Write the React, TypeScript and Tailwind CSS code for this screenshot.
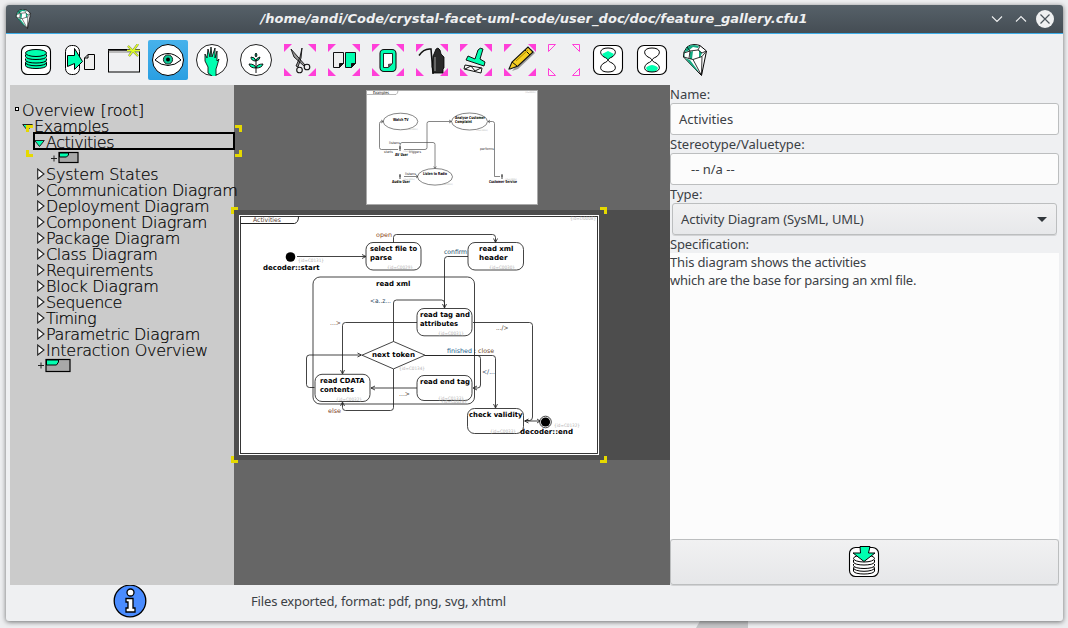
import React from 'react';

const GREEN = '#00ffb0';

type TextProps = {
  x: number;
  y: number;
  w: number;
  children: string;
  size?: number;
  bold?: boolean;
  fill?: string;
};

function Label({ x, y, w, children, size = 7, bold = false, fill = '#000' }: TextProps) {
  return (
    <text
      x={x}
      y={y}
      textLength={w}
      lengthAdjust="spacingAndGlyphs"
      fontSize={size}
      fontWeight={bold ? 700 : 400}
      fill={fill}
    >
      {children}
    </text>
  );
}

function Id({ x, y, w = 26, children, size = 4.6 }: { x: number; y: number; w?: number; children: string; size?: number }) {
  return (
    <Label x={x} y={y} w={w} size={size} fill="#b4b4b4">
      {children}
    </Label>
  );
}

function Disks({ fill, y = 0 }: { fill: string; y?: number }) {
  return (
    <g fill={fill} stroke="#000" strokeWidth="1" transform={`translate(0 ${y})`}>
      <path d="M5.500 19.500v3c0 4 21 4 21 0v-3" />
      <ellipse cx="16" cy="19.500" rx="10.500" ry="3.300" />
      <path d="M5.500 15.500v1.500c0 4 21 4 21 0v-1.500" />
      <path d="M5.500 11.500v2c0 4 21 4 21 0v-2" />
      <ellipse cx="16" cy="10" rx="10.500" ry="3.500" />
    </g>
  );
}

function Corners() {
  return <path d="M0 0h8L0 8zM32 0v8L24 0zM0 32v-8l8 8zM32 32h-8l8-8z" fill="#ff3fd8" />;
}

function Gem() {
  return (
    <g strokeLinejoin="round">
      <path d="M7 3Q10 .6 14 .6q4 0 6 1l6.500 5.400L21.500 31.500 5 14.500 3.500 13 4 8z" fill="#fff" stroke="#000" strokeWidth="1" />
      <path d="M7 3Q10 1 14 1l5 1-1 2-5-1-5 4-3 1-.5 5L4 13l.5-5z" fill="#14a982" />
      <path d="M5 14l5 2 9 12-4-3zM10 8l3-1-1 8h-2zM19 6l3 3-2 5-1-1z" fill="#14a982" />
      <path
        d="M7 3l3 4 8-1 2-4M10 7L4 9M18 6l4 3 4-2M10 7L9 14.500l4 1 9-3 4-5M9 14.500L4 13M13 15.500l8 15M22 12.500l-.5 18"
        fill="none"
        stroke="#000"
        strokeWidth=".8"
      />
    </g>
  );
}

function Hourglass({ top }: { top: boolean }) {
  return (
    <g stroke="#000">
      <rect x="1.500" y="1.500" width="29" height="29" rx="6.500" fill="#fff" strokeWidth="1.100" />
      {top ? (
        <path d="M10 10l6-3 6 3q-1 3-4 4l-2 2-2-2q-3-1-4-4z" fill={GREEN} stroke="none" />
      ) : (
        <path d="M10 24q1-2 6-3 5 1 6 3-1 4-6 4t-6-4z" fill={GREEN} stroke="none" />
      )}
      <path d="M16 4c-9 0-9 6-4 9 5 2 5 4 0 6-5 3-5 9 4 9s9-6 4-9c-5-2-5-4 0-6 5-3 5-9-4-9z" fill="none" />
    </g>
  );
}

const icons: React.ReactNode[] = [
  <g>
    <rect x="1.500" y="1.500" width="29" height="29" rx="6" fill="#fff" stroke="#000" strokeWidth="1.100" />
    <Disks fill={GREEN} y={-1} />
  </g>,
  <g stroke="#000">
    <rect x="1.500" y="1.500" width="14" height="29" rx="6" fill="#fff" />
    <path d="M3.500 11.500h7V4.500l8 13-8 8v-6l-7 3z" fill={GREEN} />
    <path d="M24 10.500h6.500v15h-10V14z" fill="#eee" />
    <path d="M24 10.500V14h-3.500" fill="none" />
  </g>,
  <g>
    <rect x=".5" y="5.500" width="31" height="22.500" fill="#eff0f2" stroke="#000" />
    <path d="M1 7.500h30" stroke="#bbb" strokeWidth="3" />
    <path d="M.5 6.500h31" stroke="#444" />
    <path d="M20 2l10 10M30 0L21 12M19 6.500h13" stroke="#666" strokeWidth="2.200" />
    <path d="M20 2l10 10M30 0L21 12M19 6.500h13" stroke="#dfff25" strokeWidth="1.500" />
  </g>,
  <g>
    <circle cx="16" cy="16" r="15.500" fill="#fff" stroke="#000" />
    <path d="M3 16q6-6.500 13-6.500t13 6.500q-6 5.500-13 5.500T3 16z" fill="#fff" stroke="#000" />
    <circle cx="16" cy="15.500" r="4.600" fill="#09c996" stroke="#222" />
    <circle cx="16" cy="15.500" r="2" fill="#000" />
  </g>,
  <g>
    <circle cx="16" cy="16" r="15.500" fill="#fff" stroke="#222" />
    <path d="M12 29v-6l-3-6V10l2 4 1-9 2 8 1-10 1 10 3-9v10l2-7v10l2-2-2 7-1 3v10z" fill={GREEN} stroke="#111" strokeWidth=".9" />
  </g>,
  <g>
    <circle cx="16" cy="16" r="15.500" fill="#fff" stroke="#222" />
    <g fill={GREEN} stroke="#111" strokeWidth="1">
      <path d="M16 29V15M16 24q-1-4-7-4 1 4 7 4zM16 24q1-4 7-4-1 4-7 4zM16 17q-1-4-5-4 0 4 5 4zM16 17q0-3 4-4 0 3-4 4z" />
      <path d="M16 13q-2-2 0-4 2 2 0 4z" />
    </g>
  </g>,
  <g>
    <Corners />
    <g fill="#eee" stroke="#111" strokeWidth="1.100">
      <path d="M7 5l3 8 10 9 1-1zM18 4l-2 9-4 9 2 1 3-9z" fill="#999" strokeWidth=".9" />
      <circle cx="15.500" cy="26" r="2.800" />
      <circle cx="23" cy="23" r="2.800" />
    </g>
  </g>,
  <g>
    <Corners />
    <g stroke="#111" strokeWidth="1">
      <path d="M5.500 8.500h10v11l-4 4h-6z" fill="#eee" />
      <path d="M17.500 8.500h10v11l-4 4h-6z" fill={GREEN} />
      <path d="M15.500 19.500l-4 4v-4zM27.500 19.500l-4 4v-4z" fill="#111" />
    </g>
  </g>,
  <g>
    <Corners />
    <rect x="8" y="5.500" width="16" height="22" rx="4" fill={GREEN} stroke="#111" strokeWidth="1.100" />
    <path d="M11.500 9.500h9v10l-4 4h-5z" fill="#fff" stroke="#111" strokeWidth=".9" />
    <path d="M21 19l-5 5v-4z" fill="#555" />
  </g>,
  <g>
    <Corners />
    <path d="M3 11.500Q8 4 15 5l2 25" fill="none" stroke="#111" strokeWidth="1.500" />
    <path d="M18 10l2-5 2-1 2 2 1 4 3 3v11l-1 1v4H17v-4l-1-2 1-11z" fill="#292929" stroke="#000" strokeWidth=".8" />
    <path d="M19 13v14" stroke="#666" strokeWidth="2" />
  </g>,
  <g>
    <Corners />
    <g stroke="#111" strokeWidth="1">
      <path d="M8 12l7 3 3-9q2-3 5-1l-3 10 5 3-1 4-18-6z" fill={GREEN} />
      <path d="M5 21l17 3-1 5-17-4zM5 25l6-3 4 5 6-3" fill="#fff" />
    </g>
  </g>,
  <g>
    <Corners />
    <path d="M27 5l4 4-17 16-6 2z" fill="#999" />
    <path d="M5 25l3-7L24 3l5 5-15 14-8 3z" fill="#f5ce20" stroke="#111" strokeWidth="1.100" />
    <path d="M8 18l5 4M21 6l5 5" stroke="#111" />
    <path d="M12 17L24 6" stroke="#ac8c00" />
  </g>,
  <path d="M.5.500h7l-7 7zM31.500.500v7l-7-7zM.5 31.500v-7l7 7zM31.500 31.500h-7l7-7z" fill="#f5eef4" stroke="#ff3fd8" />,
  <Hourglass top />,
  <Hourglass top={false} />,
  <Gem />,
];

function Toolbar() {
  return (
    <div className="flex h-[51px] shrink-0 gap-1 pl-2.5 pt-1.5">
      {icons.map((icon, i) => (
        <button
          key={i}
          className={
            i === 3
              ? 'flex size-10 items-center justify-center rounded-[2px] bg-gradient-to-b from-[#47b2eb] to-[#299fe2]'
              : 'flex size-10 items-center justify-center'
          }
        >
          <svg width="32" height="32" viewBox="0 0 32 32" fill="none">
            {icon}
          </svg>
        </button>
      ))}
    </div>
  );
}

function TitleBar() {
  return (
    <header className="flex h-[29px] shrink-0 items-center rounded-t-[3px] border-b border-[#3daee9] bg-gradient-to-b from-[#566169] to-[#454d54] pl-2 pr-[9px]">
      <svg width="20" height="20" viewBox="0 0 32 32" className="shrink-0">
        <Gem />
      </svg>
      <h1 className="flex-1 whitespace-nowrap pl-[46px] text-center font-['DejaVu_Sans'] text-[13px] font-bold italic leading-7 tracking-[0.035px] text-[#eff0f1]">
        /home/andi/Code/crystal-facet-uml-code/user_doc/doc/feature_gallery.cfu1
      </h1>
      <svg width="66" height="20" viewBox="0 0 66 20" fill="none">
        <path d="M4 7.500l5 5 5-5M28 12.500l5-5 5 5" stroke="#eff0f1" strokeWidth="1.100" />
        <circle cx="57" cy="10" r="9" fill="#eff0f1" />
        <path d="M52.500 5.500l9 9m0-9l-9 9" stroke="#4b545b" strokeWidth="1.200" />
      </svg>
    </header>
  );
}

function AddIcon({ small }: { small?: boolean }) {
  const w = small ? 20 : 25;
  const h = small ? 11 : 13;
  return (
    <svg width="34" height="16" viewBox="0 0 34 16" fill="none">
      <path d="M0 7.500h6M3 4.500v6" stroke="#222" />
      <rect x="8" y="1.500" width={w - 1} height={h - 1} fill="#a8a8a8" stroke="#000" strokeWidth="1.200" />
      <path d={small ? 'M8.500 2h9v2l-2 2h-7z' : 'M8.500 2h12v2l-2 3h-10z'} fill={GREEN} stroke="#000" />
    </svg>
  );
}

const closedRows: [string, string][] = [
  ['System States', 'tracking-[-0.23px]'],
  ['Communication Diagram', 'tracking-[-0.38px]'],
  ['Deployment Diagram', 'tracking-[-0.44px]'],
  ['Component Diagram', 'tracking-[-0.3px]'],
  ['Package Diagram', 'tracking-[-0.33px]'],
  ['Class Diagram', 'tracking-[-0.3px]'],
  ['Requirements', 'tracking-[-0.33px]'],
  ['Block Diagram', 'tracking-[-0.26px]'],
  ['Sequence', 'tracking-[-0.37px]'],
  ['Timing', 'tracking-[-0.6px]'],
  ['Parametric Diagram', 'tracking-[-0.33px]'],
  ['Interaction Overview', 'tracking-[-0.27px]'],
];

function OpenArrow() {
  return (
    <svg width="11" height="9" viewBox="0 0 11 9" className="mr-px shrink-0">
      <path d="M.7 1.500h9.600l-4.800 6z" fill={GREEN} stroke="#222" />
    </svg>
  );
}

function Tree() {
  return (
    <nav className="relative z-10 w-[224px] shrink-0 whitespace-nowrap bg-[#cbcbcb] pt-[18px] font-['DejaVu_Sans'] text-[16px] font-extralight leading-4 text-black [-webkit-text-stroke:0.2px_#000]">
      <div className="flex h-4 items-center pl-[5px] tracking-[-0.2px]">
        <span className="mb-1 mr-[3px] size-1 border border-black bg-white" />
        Overview [root]
      </div>
      <div className="flex h-4 items-center pl-3 tracking-[-0.35px]">
        <OpenArrow />
        Examples
      </div>
      <div className="flex h-4 items-center pl-6 tracking-[-0.5px]">
        <OpenArrow />
        Activities
      </div>
      <div className="flex h-4 pl-[41px]">
        <AddIcon small />
      </div>
      {closedRows.map(([name, tracking]) => (
        <div key={name} className={`flex h-4 items-center pl-[27px] ${tracking}`}>
          <svg width="8" height="12" viewBox="0 0 8 12" className="mb-0.5 mr-px shrink-0">
            <path d="M.7 1v10l6.300-5z" fill="#fff" stroke="#222" strokeWidth="1.100" />
          </svg>
          {name}
        </div>
      ))}
      <div className="-mt-px flex h-4 pl-7">
        <AddIcon />
      </div>
      <div className="absolute left-[23px] top-[47px] h-[18px] w-[202px] border-2 border-black" />
      <svg className="absolute left-4 top-10" width="216" height="32" viewBox="0 0 216 32">
        <path d="M0 0h7v3H3v4H0zM209 0h7v7h-3V3h-4zM0 25h3v4h4v3H0zM213 25h3v7h-7v-3h4z" fill="#e5d900" />
      </svg>
    </nav>
  );
}

function ExamplesDiagram() {
  return (
    <svg width="172" height="115" viewBox="366 90 172 115" className="font-['DejaVu_Sans']">
      <rect x="366" y="90" width="172" height="115" fill="#fff" />
      <rect x="366.500" y="90.500" width="171" height="114" fill="none" stroke="#aaa" />
      <path d="M367 94.500h29q2-1 2-4" fill="none" stroke="#888" strokeWidth=".6" />
      <g fill="none" stroke="#444" strokeWidth=".65">
        <ellipse cx="400.500" cy="121.500" rx="17.300" ry="8.300" />
        <ellipse cx="469.500" cy="121.500" rx="18" ry="8.500" />
        <ellipse cx="435" cy="176.800" rx="17.500" ry="8.300" />
        <path d="M398 149.500h-16.500q-2 0-2-2V123.500q0-2 2-2H383" />
        <path d="M404 149.500h21q2 0 2-2V123.500q0-2 2-2h22" />
        <path d="M400 147v-1.500q0-3 2-3h31q2 0 2 2V168" />
        <path d="M404 176.500h14" />
        <path d="M500 176.500h-5.500V123.500q0-2-2-2H488" />
        <path d="M381 120l2.500 1.500L381 123M449 120l2.500 1.500-2.500 1.500M433.700 166.500l1.300 2 1.300-2M416 175l2 1.500-2 1.500M490 120l-2 1.500 2 1.500" />
        <path d="M400 146v5M399 148h2M400 174v5M399 176h2M502 174v5M501 176h2" strokeWidth="1" />
      </g>
      <Label x={373} y={94.300} w={16} size={4}>Examples</Label>
      <Label x={393} y={120.500} w={15.500} size={4} bold>Watch TV</Label>
      <Label x={455} y={119} w={30} size={4} bold>Analyse Customer</Label>
      <Label x={455} y={123} w={17} size={4} bold>Complaint</Label>
      <Label x={423} y={175} w={24} size={4} bold>Listen to Radio</Label>
      <Label x={395} y={155.500} w={13} size={4} bold>AV User</Label>
      <Label x={392} y={183} w={18} size={4} bold>Audio User</Label>
      <Label x={489} y={183} w={28} size={4} bold>Customer Service</Label>
      <Label x={389} y={144} w={11} size={3.500} fill="#333">listens</Label>
      <Label x={384} y={153} w={9} size={3.500} fill="#333">starts</Label>
      <Label x={409} y={153} w={12} size={3.500} fill="#333">triggers</Label>
      <Label x={405} y={175} w={11} size={3.500} fill="#333">listens</Label>
      <Label x={480} y={150} w={14} size={3.500} fill="#333">performs</Label>
      <Id x={525} y={93} w={11} size={2.200}>{'{id=D0001}'}</Id>
      <Id x={406} y={130} w={12} size={2.200}>{'{id=C0001}'}</Id>
      <Id x={476} y={131} w={12} size={2.200}>{'{id=C0004}'}</Id>
      <Id x={441} y={185} w={12} size={2.200}>{'{id=C0002}'}</Id>
      <Id x={403} y={151.500} w={12} size={2.200}>{'{id=C0003}'}</Id>
      <Id x={403} y={179.500} w={12} size={2.200}>{'{id=C0005}'}</Id>
      <Id x={505} y={179.500} w={12} size={2.200}>{'{id=C0006}'}</Id>
    </svg>
  );
}

function ActivitiesDiagram() {
  return (
    <svg width="436" height="250" viewBox="234 210 436 250" className="block font-['DejaVu_Sans']">
      <rect x="239" y="215" width="360" height="240" fill="#fff" />
      <rect x="240.500" y="216.500" width="357" height="237" fill="none" stroke="#222" strokeWidth=".9" />
      <path d="M240.500 223.500h54q4-1 4-7" fill="none" stroke="#222" />
      <g fill="none" stroke="#222" strokeWidth=".85">
        <rect x="366" y="242.500" width="55" height="27.500" rx="7" />
        <rect x="468" y="242.500" width="55.500" height="27.500" rx="7" />
        <rect x="313" y="277" width="161.500" height="127" rx="7" />
        <rect x="417" y="308.500" width="55" height="27.300" rx="7" />
        <rect x="315" y="374.300" width="55" height="27.200" rx="7" />
        <rect x="417" y="375.500" width="55" height="25" rx="7" />
        <rect x="467.500" y="408.500" width="56" height="25" rx="7" />
        <path d="M362 355.200l31.500-13.700 31.500 13.700-31.500 13.700z" />
        <path d="M297 256.500h68.500" />
        <path d="M393.500 242.500v-5q0-3 3-3h96q3 0 3 3v4.500" />
        <path d="M468 256.500h-20.500q-3 0-3 3V308" />
        <path d="M393.500 341.500V303q0-3 3-3h45q3 0 3 3v5" />
        <path d="M417 322.500h-71.500q-3 0-3 3V373.500" />
        <path d="M473 322.500h56.500q3 0 3 3V417q0 3.500-3 3.500H525" />
        <path d="M314.500 387.500h-5q-3 0-3-3v-26.500q0-3 3-3h51.500" />
        <path d="M425 355.500h67.500q3 0 3 3V407.500" />
        <path d="M425 355.500h52.500q3 0 3 3v26.500q0 3-3 3h-4" />
        <path d="M417 388h-46" />
        <path d="M393.500 369v38.500q0 3-3 3h-45q-3 0-3-3V403" />
        <path d="M525 421h15" />
        <path d="M362 254.500l4 2-4 2M493.500 238.500l2 4 2-4M442.500 304l2 4 2-4M340.500 370l2 4 2-4M357.500 353l4 2-4 2M493.500 404l2 4 2-4M477 386l-4 2 4 2M375 386l-4 2 4 2M340.500 406l2-4 2 4M528.500 419l-4 2 4 2M537 419l3 2-3 2" />
        <circle cx="545.500" cy="422" r="5.800" />
      </g>
      <circle cx="290.500" cy="257" r="4.800" />
      <circle cx="545.500" cy="422" r="4.600" />
      <Label x={253} y={222} w={28} size={6.400} fill="#5a4030">Activities</Label>
      <Label x={263} y={270} w={56.500} bold>decoder::start</Label>
      <Label x={370} y={251} w={47} bold>select file to</Label>
      <Label x={370} y={260} w={22} bold>parse</Label>
      <Label x={479} y={251} w={34.500} bold>read xml</Label>
      <Label x={479} y={260} w={28.500} bold>header</Label>
      <Label x={376} y={286} w={34.500} bold>read xml</Label>
      <Label x={420} y={317} w={50} bold>read tag and</Label>
      <Label x={420} y={326} w={38} bold>attributes</Label>
      <Label x={372} y={357} w={43} bold>next token</Label>
      <Label x={320} y={383} w={44.500} bold>read CDATA</Label>
      <Label x={320} y={392} w={34} bold>contents</Label>
      <Label x={420} y={384} w={50} bold>read end tag</Label>
      <Label x={469} y={417} w={53.500} bold>check validity</Label>
      <Label x={520} y={434} w={53} bold>decoder::end</Label>
      <Label x={376} y={237} w={16} size={6.400} fill="#8c3f14">open</Label>
      <Label x={444} y={254} w={23} size={6.400} fill="#184a6a">confirm</Label>
      <Label x={370} y={303} w={21} size={6.400} fill="#25435b">{'<a..z...'}</Label>
      <Label x={330} y={325} w={11} size={6.400} fill="#66482a">{'...>'}</Label>
      <Label x={496} y={330} w={12.500} size={6.400} fill="#443525">{'.../>'}</Label>
      <Label x={447} y={353} w={25} size={6.400} fill="#185c8c">finished</Label>
      <Label x={474} y={353} w={2} size={6.400}>:</Label>
      <Label x={478} y={353} w={16} size={6.400} fill="#6b3d1b">close</Label>
      <Label x={482} y={374} w={13} size={6.400} fill="#25435b">{'</...'}</Label>
      <Label x={399} y={396} w={11} size={6.400} fill="#443525">{'...>'}</Label>
      <Label x={328} y={413} w={13} size={6.400} fill="#7a3d1b">else</Label>
      <Id x={298} y={261.500}>{'{id=C0131}'}</Id>
      <Id x={387} y={268.500}>{'{id=C0029}'}</Id>
      <Id x={489} y={268.500}>{'{id=C0030}'}</Id>
      <Id x={438} y={334.500}>{'{id=C0031}'}</Id>
      <Id x={399} y={369.500}>{'{id=C0134}'}</Id>
      <Id x={336} y={400.500}>{'{id=C0032}'}</Id>
      <Id x={438} y={399.500}>{'{id=C0133}'}</Id>
      <Id x={441} y={403}>{'{id=C0028}'}</Id>
      <Id x={490} y={432.500}>{'{id=C0033}'}</Id>
      <Id x={554} y={426.500}>{'{id=C0132}'}</Id>
      <Id x={570} y={220}>{'{id=D0008}'}</Id>
    </svg>
  );
}

function Canvas() {
  return (
    <main className="relative flex w-[436px] shrink-0 flex-col bg-[#666]">
      <div className="h-[125px] pl-[132px] pt-[5px]">
        <ExamplesDiagram />
      </div>
      <div className="h-[250px] bg-[#4d4d4d]">
        <ActivitiesDiagram />
      </div>
      <svg className="absolute -left-[3px] top-[122px] z-20" width="376" height="256" viewBox="0 0 376 256">
        <path d="M0 0h7v3H3v4H0zM369 0h7v7h-3V3h-4zM0 249h3v4h4v3H0zM373 249h3v7h-7v-3h4z" fill="#e5d900" />
      </svg>
    </main>
  );
}

function FormPanel() {
  return (
    <section className="flex flex-1 flex-col text-[13px] leading-[18px] text-[#3b4045]">
      <label className="h-[18px]">Name:</label>
      <div className="flex h-8 items-center rounded-[3px] border border-[#bcbebf] bg-[#fcfcfc] px-2">Activities</div>
      <label className="h-[18px]">Stereotype/Valuetype:</label>
      <div className="flex h-8 items-center rounded-[3px] border border-[#bcbebf] bg-[#fcfcfc] px-5">-- n/a --</div>
      <label className="h-[18px]">Type:</label>
      <button className="mx-0.5 flex h-8 items-center justify-between rounded-[3px] border border-[#bcbebf] bg-gradient-to-b from-[#f1f1f2] to-[#e7e8ea] pl-2 pr-[9px] tracking-[-0.07px] shadow-[0_1px_0_#d2d3d5]">
        Activity Diagram (SysML, UML)
        <svg width="10" height="5" viewBox="0 0 10 5">
          <path d="M0 0h10L5 5z" fill="#31363b" />
        </svg>
      </button>
      <label className="h-[18px] tracking-[-0.14px]">Specification:</label>
      <div className="flex-1 bg-[#fcfcfc]">
        <p className="tracking-[-0.15px]">This diagram shows the activities</p>
        <p className="tracking-[-0.21px]">which are the base for parsing an xml file.</p>
      </div>
      <button className="flex h-[46px] items-center justify-center rounded-[3px] border border-[#bcbebf] bg-gradient-to-b from-[#f1f1f2] to-[#e6e7e9] pr-px shadow-[0_1px_0_#d2d3d5]">
        <svg width="32" height="32" viewBox="0 0 32 32" fill="none">
          <rect x="1.500" y="1.500" width="29" height="29" rx="6" fill="#fff" stroke="#000" strokeWidth="1.100" />
          <Disks fill="#fff" y={2.500} />
          <path d="M12 .5h10l-1.500 6.500H27L16 15.500 5 7h7.500z" fill={GREEN} stroke="#000" />
        </svg>
      </button>
    </section>
  );
}

export default function App() {
  return (
    <div className="flex h-[628px] w-[1068px] flex-col overflow-hidden bg-[#edeef0] pl-1.5 pt-[5px] font-['Noto_Sans',sans-serif]">
      <div className="relative z-10 flex h-[616px] w-[1057px] shrink-0 flex-col rounded-[3px] bg-[#eff0f2] shadow-[0_1px_5px_rgba(0,0,0,0.55)]">
        <TitleBar />
        <Toolbar />
        <div className="flex h-[500px] shrink-0 pl-1 pr-1">
          <Tree />
          <Canvas />
          <FormPanel />
        </div>
        <footer className="flex h-9 items-start text-[13px] text-[#3b4045]">
          <svg width="34" height="34" viewBox="0 0 34 34" className="ml-[107px] mt-[-1px] shrink-0">
            <circle cx="17" cy="17" r="15.800" fill="#4a8cff" stroke="#000" strokeWidth="1.300" />
            <circle cx="17.500" cy="8.500" r="3.500" fill="#fff" stroke="#000" strokeWidth="1.300" />
            <path d="M13 14.500h7v9.500h2v4h-9v-4h2v-6h-2z" fill="#fff" stroke="#000" strokeWidth="1.300" />
          </svg>
          <p className="ml-[104px] mt-[7px] leading-[18px] tracking-[-0.16px]">Files exported, format: pdf, png, svg, xhtml</p>
        </footer>
      </div>
      <svg width="54" height="7" viewBox="0 0 54 7" className="ml-[690px] shrink-0">
        <path d="M4 0h48v7H0z" fill="#c5c6c8" />
      </svg>
    </div>
  );
}
